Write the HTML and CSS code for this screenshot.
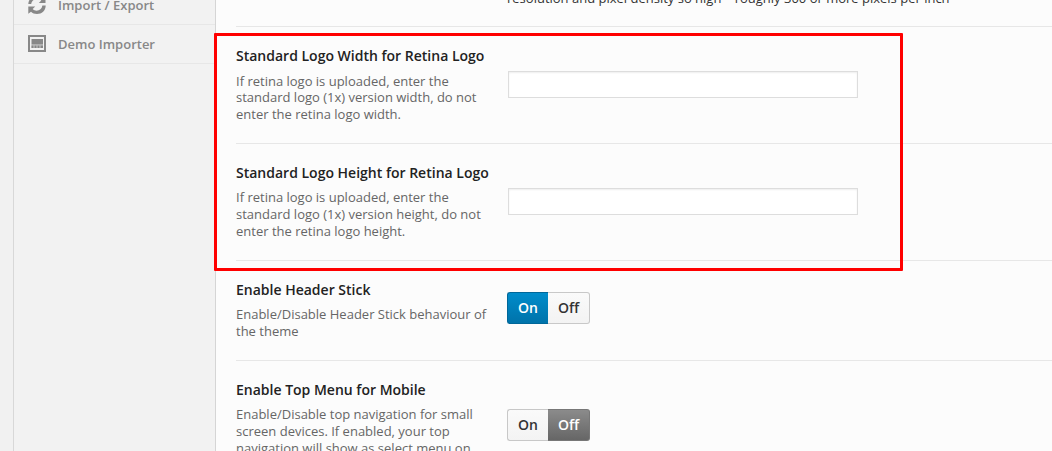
FILE: index.html
```
<!DOCTYPE html>
<html lang="en">
<head>
<meta charset="utf-8">
<title>Theme Options</title>
<link rel="stylesheet" href="styles.css">
</head>
<body>
<div class="panel">
  <nav class="sidebar">
    <a class="menu-item">
      <svg class="icon" viewBox="0 0 20 20"><path d="M1.300 9C1.300 4.500 5 1 9.800 1c2.500 0 4.500 1 6 2.500L18.500 1.300V8h-6.700l2.500-2.500C12.800 4.300 11.500 4 10 4 7 4 4.600 6 4.200 9zM18.700 10.500c0 5-3.900 8.500-8.700 8.500-2.500 0-4.500-1-6-2.300L1.300 18.700V11.500h6.900l-2.500 2.500c1 1 2.400 1.700 3.900 1.700 3 0 5.300-2 5.800-5.200z"/></svg>
      <span>Import / Export</span>
    </a>
    <a class="menu-item">
      <svg class="icon" viewBox="0 0 20 20"><path fill-rule="evenodd" d="M1 1h18v17H1zM3 3v13h14V3z"/><path d="M4.500 5h11.500v5.500H4.500zM4.500 11.500h2V14h-2zM7.500 11.500h2V14h-2zM10.500 11.500h2V14h-2zM13.500 11.500H16V14h-2.500z"/><path opacity=".45" d="M4.500 10.500H16V14H4.500z"/></svg>
      <span>Demo Importer</span>
    </a>
  </nav>
  <main class="content">
    <section class="field intro">
      <div class="label"></div>
      <p class="note">resolution and pixel density so high – roughly 300 or more pixels per inch</p>
    </section>
    <section class="field">
      <div class="label"><h3>Standard Logo Width for Retina Logo</h3><p>If retina logo is uploaded, enter the<br>standard logo (1x) version width, do not<br>enter the retina logo width.</p></div>
      <input class="text" type="text">
    </section>
    <section class="field">
      <div class="label"><h3>Standard Logo Height for Retina Logo</h3><p>If retina logo is uploaded, enter the<br>standard logo (1x) version height, do not<br>enter the retina logo height.</p></div>
      <input class="text" type="text">
    </section>
    <section class="field short">
      <div class="label"><h3>Enable Header Stick</h3><p>Enable/Disable Header Stick behaviour of<br>the theme</p></div>
      <div class="switch"><span class="on active">On</span><span class="off">Off</span></div>
    </section>
    <section class="field">
      <div class="label"><h3>Enable Top Menu for Mobile</h3><p>Enable/Disable top navigation for small<br>screen devices. If enabled, your top<br>navigation will show as select menu on</p></div>
      <div class="switch"><span class="on">On</span><span class="off active">Off</span></div>
    </section>
  </main>
</div>
<div class="highlight"></div>
</body>
</html>
```
FILE: styles.css
```
* { box-sizing: border-box; }
body {
  margin: 0;
  height: 451px;
  overflow: hidden;
  background: #f1f1f1;
  font-family: "Open Sans", sans-serif;
  font-size: 13px;
}
h3, p { margin: 0; }
.panel { display: flex; height: 451px; margin-left: 13px; border-left: 1px solid #d8d8d8; overflow: hidden; }
.sidebar { flex: none; width: 202px; background: #f2f2f2; border-right: 1px solid #d5d5d5; }
.menu-item {
  display: flex;
  align-items: center;
  height: 39px;
  padding-left: 13px;
  gap: 11px;
  border-bottom: 1px solid #e7e7e7;
  color: #888;
  font-weight: 600;
}
.menu-item:first-child { margin-top: -14px; }
.icon { width: 20px; height: 20px; fill: #888; }
.content { flex: 1; padding-left: 20px; background: #fcfcfc; }
.field { display: flex; height: 117px; border-bottom: 1px solid #e7e7e7; }
.field.short { height: 100px; }
.intro { height: 27px; }
.label { flex: none; width: 272px; padding-top: 19px; }
.label h3 { color: #222; font-size: 14px; font-weight: 600; line-height: 19px; white-space: nowrap; }
.label p { margin-top: 7px; color: #666; line-height: 16.9px; white-space: nowrap; }
.field:nth-child(2) .label p { margin-top: 7.500px; line-height: 16.700px; }
.note { margin: -11px 0 0 -1px; color: #333; line-height: 18px; white-space: nowrap; }
.text {
  width: 350px;
  height: 27px;
  margin: 44px 0 0;
  padding: 3px 5px;
  border: 1px solid #ddd;
  border-radius: 0;
  background: #fff;
  box-shadow: inset 0 1px 2px rgba(0,0,0,.07);
}
.switch { display: flex; height: 32px; margin: 31px 0 0 -1px; font-size: 14px; font-weight: 600; line-height: 30px; text-align: center; }
.field:last-child .switch { margin-top: 48px; }
.switch span { color: #333; background: linear-gradient(#fafafa, #f3f3f3); border: 1px solid #c8c8c8; }
.switch .on { width: 41px; border-right: 0; border-radius: 3px 0 0 3px; }
.switch .off { width: 42px; border-left: 0; border-radius: 0 3px 3px 0; }
.switch .on.active { color: #fff; border-color: #006799; background: linear-gradient(#008ccb, #0073aa); }
.switch .off.active { color: #fff; border-color: #777; background: linear-gradient(#8b8b8b, #666); }
.highlight { position: absolute; left: 214px; top: 33px; width: 689px; height: 238px; border: 3px solid #f00; border-radius: 1px; }
```
